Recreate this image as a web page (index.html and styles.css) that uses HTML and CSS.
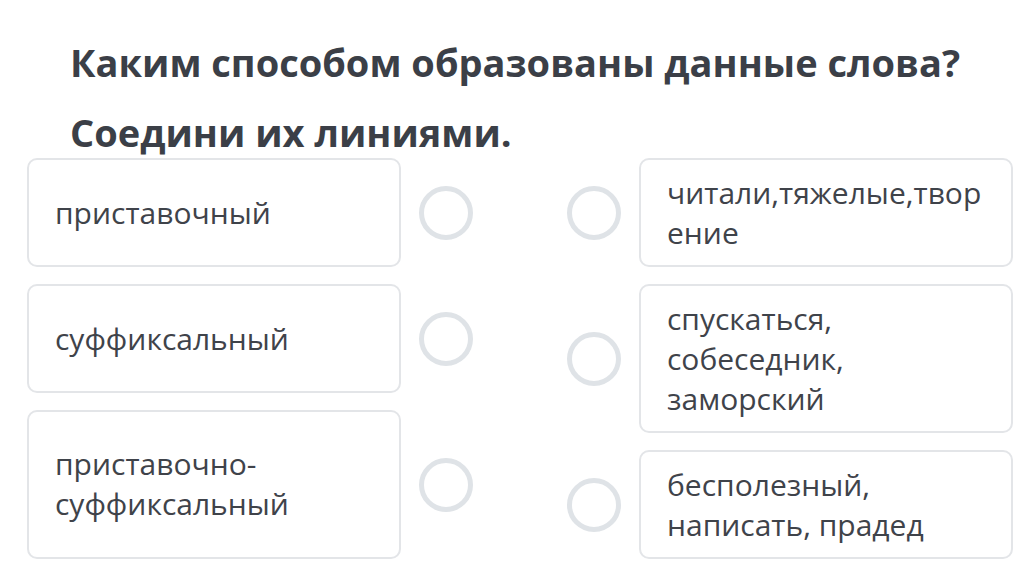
FILE: index.html
```html
<!DOCTYPE html>
<html lang="ru">
<head>
<meta charset="utf-8">
<title>Соедини линиями</title>
<link rel="stylesheet" href="styles.css">
</head>
<body>
<header class="question">
  <h1 class="q-line">Каким способом образованы данные слова?</h1>
  <p class="q-line">Соедини их линиями.</p>
</header>
<main class="board">
  <div class="column">
    <div class="row">
      <div class="card">приставочный</div>
      <span class="dot"></span>
    </div>
    <div class="row">
      <div class="card">суффиксальный</div>
      <span class="dot"></span>
    </div>
    <div class="row">
      <div class="card card-tall">приставочно-<br>суффиксальный</div>
      <span class="dot"></span>
    </div>
  </div>
  <div class="column">
    <div class="row">
      <span class="dot"></span>
      <div class="card">читали,тяжелые,творение</div>
    </div>
    <div class="row">
      <span class="dot"></span>
      <div class="card">спускаться, собеседник, заморский</div>
    </div>
    <div class="row">
      <span class="dot"></span>
      <div class="card">бесполезный, написать, прадед</div>
    </div>
  </div>
</main>
</body>
</html>
```

FILE: styles.css
```css
html, body {
  margin: 0;
  padding: 0;
  background: #ffffff;
}

body {
  font-family: "Open Sans", "Noto Sans", sans-serif;
  color: #3f434a;
  width: 1021px;
  height: 587px;
  overflow: hidden;
}

.question {
  padding: 36px 0 0 70px;
  display: flex;
  flex-direction: column;
  gap: 18px;
}

.q-line {
  margin: 0;
  font-size: 38px;
  line-height: 52px;
  font-weight: 700;
  color: #3b3f47;
  white-space: nowrap;
}

.board {
  display: flex;
  gap: 94px;
  padding-left: 27px;
}

.column {
  display: flex;
  flex-direction: column;
  gap: 17px;
}

.row {
  display: flex;
  align-items: center;
  gap: 18px;
}

.card {
  box-sizing: border-box;
  width: 374px;
  min-height: 109px;
  padding: 12.5px 26px;
  border: 2px solid #e3e5e8;
  border-radius: 10px;
  font-size: 30px;
  line-height: 40px;
  display: flex;
  flex-direction: column;
  justify-content: center;
  overflow-wrap: anywhere;
}

.card-tall {
  display: block;
  min-height: 149px;
  padding-top: 32px;
}

.dot {
  box-sizing: border-box;
  width: 54px;
  height: 54px;
  border: 5px solid #dfe3e7;
  border-radius: 50%;
  flex: none;
}
```
